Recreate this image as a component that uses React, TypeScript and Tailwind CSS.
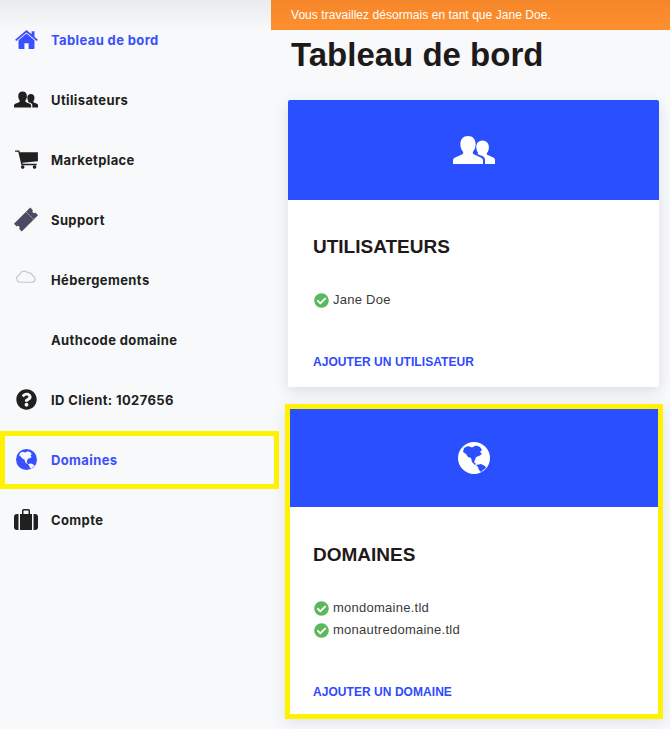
import { FaQuestionCircle, FaCheckCircle } from "react-icons/fa";
import type { ReactNode } from "react";

function HomeIcon() {
  return (
    <svg viewBox="0 0 24 20" className="w-[23px] h-[19px]" fill="currentColor">
      <path d="M12 3.6 3.6 10.8V19a1 1 0 0 0 1 1h5.2v-6h4.4v6h5.2a1 1 0 0 0 1-1v-8.2z" />
      <path d="M12 0 0 10.2l1.3 1.5L12 2.6l10.7 9.1 1.3-1.5-3.6-3.1V1.2h-3v3.3z" />
    </svg>
  );
}

function UsersIcon({ className }: { className: string }) {
  return (
    <svg viewBox="0 0 42 28" className={className} fill="currentColor">
      <path d="M0 28v-3.6c0-1.4.8-2.4 2.2-3l6.6-2.8c1.3-.6 1.7-1.6 1.2-2.8-1.5-2-2.5-4.2-2.6-7.4C7.200 3.400 10.300 0 15 0s7.800 3.400 7.600 8.400c-.1 3.200-1.100 5.400-2.600 7.400-.5 1.200-.1 2.200 1.200 2.800l6.600 2.800c1.400.6 2.200 1.600 2.200 3V28z" />
      <path d="M32 28v-4c0-1.800-1-3.100-2.800-3.900l-4.300-1.900c-.4-.6-.2-1 .2-1.400-1-1.500-1.700-3.200-1.800-5.400C23 7.300 25.500 4.400 29.500 4.400s6.500 2.900 6.400 7c-.1 2.400-.9 4.200-2 5.700-.4.900-.1 1.600.9 2l5.400 2.400c1.200.5 1.800 1.300 1.800 2.500V28z" />
    </svg>
  );
}

function CartIcon() {
  return (
    <svg viewBox="0 0 24 20" className="w-[23px] h-[19px]" fill="currentColor">
      <path d="M0 .4h4.300l.7 2H24v9.400L7.700 13.300l.3 1.300h14.800v1.500H6.700L3.300 1.900H0z" />
      <circle cx="8" cy="18" r="1.900" />
      <circle cx="20.500" cy="18" r="1.900" />
    </svg>
  );
}

function TicketIcon() {
  return (
    <svg viewBox="0 0 24 24" className="w-[25px] h-[25px]" fill="#4a4a60">
      <g transform="rotate(-45 12 12)">
        <path d="M0.500 6.500h23v3.800a1.700 1.700 0 0 0 0 3.400v3.800h-23v-3.800a1.700 1.700 0 0 0 0-3.400z" />
        <path d="M17.500 6.500v11" stroke="#f8f9fb" strokeWidth="0.700" strokeDasharray="1.500 1.300" fill="none" />
      </g>
    </svg>
  );
}

function CloudIcon() {
  return (
    <svg viewBox="0 0 20 14" className="w-[20px] h-[14px]" fill="none" stroke="currentColor" strokeWidth="1.100">
      <path d="M4.300 13.300h11.500a3.300 3.300 0 0 0 .7-6.500A4 4 0 0 0 12 4 4.700 4.700 0 0 0 3.700 5.800a3.800 3.800 0 0 0 .6 7.500z" />
    </svg>
  );
}

function GlobeIcon({ className }: { className: string }) {
  return (
    <svg viewBox="0 0 32 32" className={className} fill="currentColor" fillRule="evenodd">
      <path d="M16 0a16 16 0 1 1 0 32 16 16 0 0 1 0-32z M6 6 L10 4 L14 5.500 L18 3.500 L22 5 L24 8 L22 10 L24 12 L21 14 L18 15 L17 18 L16 20 L18 22 L17 23 L14 20 L13 16 L10 15 L8 12 L5 10 Z M18 23 L23 22 L27 24 L28 26 L25 28 L23 30 L21 28 L20 25 Z" />
    </svg>
  );
}

function SuitcaseIcon() {
  return (
    <svg viewBox="0 0 24 21" className="w-[24px] h-[21px]" fill="currentColor">
      <path d="M3 5h1.500v16H3a3 3 0 0 1-3-3V8a3 3 0 0 1 3-3z" />
      <path d="M21 5h-1.500v16H21a3 3 0 0 0 3-3V8a3 3 0 0 0-3-3z" />
      <path d="M6 5h2V1.500A1.500 1.500 0 0 1 9.500 0h5A1.500 1.500 0 0 1 16 1.500V5h2v16H6zM9.500 1.500V5h5V1.500z" fillRule="evenodd" />
    </svg>
  );
}

type NavItem = { label: string; icon?: ReactNode; active?: boolean; marked?: boolean };

const items: NavItem[] = [
  { label: "Tableau de bord", icon: <HomeIcon />, active: true },
  { label: "Utilisateurs", icon: <UsersIcon className="w-[24px] h-[17px]" /> },
  { label: "Marketplace", icon: <CartIcon /> },
  { label: "Support", icon: <TicketIcon /> },
  { label: "Hébergements", icon: <span className="text-[#c4c6cc] flex -mt-2"><CloudIcon /></span> },
  { label: "Authcode domaine" },
  { label: "ID Client: 1027656", icon: <FaQuestionCircle className="w-[21px] h-[21px]" /> },
  { label: "Domaines", icon: <GlobeIcon className="w-[21px] h-[21px]" />, active: true, marked: true },
  { label: "Compte", icon: <SuitcaseIcon /> },
];

function Line({ text }: { text: string }) {
  return (
    <li className="flex items-center h-[22px]">
      <FaCheckCircle className="w-[15px] h-[15px] text-[#5cb85c] ml-[1px]" />
      <span className="ml-[4px] text-[13px] tracking-[0.25px] text-[#3a3a3a]">{text}</span>
    </li>
  );
}

function Card({ icon, title, lines, action, compact }: { icon: ReactNode; title: string; lines: string[]; action: string; compact?: boolean }) {
  return (
    <div className={`bg-white flex flex-col ${compact ? "h-full" : "rounded-[2px] h-[287px] shadow-[0_4px_14px_rgba(30,40,70,0.13)]"}`}>
      <div className={`bg-[#2a4fff] flex items-center justify-center text-white shrink-0 ${compact ? "h-[98px]" : "h-[100px] rounded-t-[2px]"}`}>{icon}</div>
      <div className={`flex flex-col flex-1 ${compact ? "pl-[23px]" : "pl-[25px]"}`}>
        <h2 className={`text-[19px] leading-[24px] font-bold text-[#1f1a1a] font-['Liberation_Sans',sans-serif] ${compact ? "mt-[36px]" : "mt-[35px]"}`}>{title}</h2>
        <ul className="mt-[30px] font-['Liberation_Sans',sans-serif]">
          {lines.map((l) => (
            <Line key={l} text={l} />
          ))}
        </ul>
        <a className={`mt-auto text-[12px] leading-[16px] font-bold tracking-[0.05px] text-[#2f49ff] font-['Liberation_Sans',sans-serif] ${compact ? "mb-[14px]" : "mb-[17px]"}`}>{action}</a>
      </div>
    </div>
  );
}

export default function App() {
  return (
    <div className="w-[670px] h-[729px] overflow-hidden flex bg-[#f8f9fb] font-['Inter',sans-serif]">
      <aside className="w-[271px] shrink-0 h-full pt-[11px] bg-[linear-gradient(to_bottom,#eaebed_0px,#f8f9fb_30px)]">
        {items.map((it) => (
          <div key={it.label} className={`relative h-[60px] flex items-center text-[13px] font-bold tracking-[0.38px] ${it.active ? "text-[#3a4fff]" : "text-[#221f20]"}`}>
            <span className="w-[51px] pl-[14px] pr-[13px] flex justify-center shrink-0 -mt-[3px]">{it.icon}</span>
            <span>{it.label}</span>
            {it.marked && <span className="absolute left-0 top-0 w-[279px] h-[58px] border-[5px] border-[#fff200]" />}
          </div>
        ))}
      </aside>
      <main className="flex-1 min-w-0">
        <div className="h-[30px] bg-[linear-gradient(to_bottom,#f5872a,#fe8f2e)] text-white text-[12px] tracking-[0.05px] leading-[30px] pl-[20px] font-['Liberation_Sans',sans-serif]">
          Vous travaillez désormais en tant que Jane Doe.
        </div>
        <h1 className="mt-[5px] ml-[20px] h-[65px] text-[33px] leading-[40px] font-bold text-[#1f1a1a] font-['Liberation_Sans',sans-serif]">Tableau de bord</h1>
        <div className="ml-[17px] w-[371px]">
          <Card icon={<UsersIcon className="w-[42px] h-[30px]" />} title="UTILISATEURS" lines={["Jane Doe"]} action="AJOUTER UN UTILISATEUR" />
        </div>
        <div className="ml-[14px] mt-[17px] w-[378px] h-[315px] border-[5px] border-[#fff200] shadow-[0_4px_14px_rgba(30,40,70,0.1)]">
          <Card compact icon={<GlobeIcon className="w-[32px] h-[32px]" />} title="DOMAINES" lines={["mondomaine.tld", "monautredomaine.tld"]} action="AJOUTER UN DOMAINE" />
        </div>
      </main>
    </div>
  );
}
